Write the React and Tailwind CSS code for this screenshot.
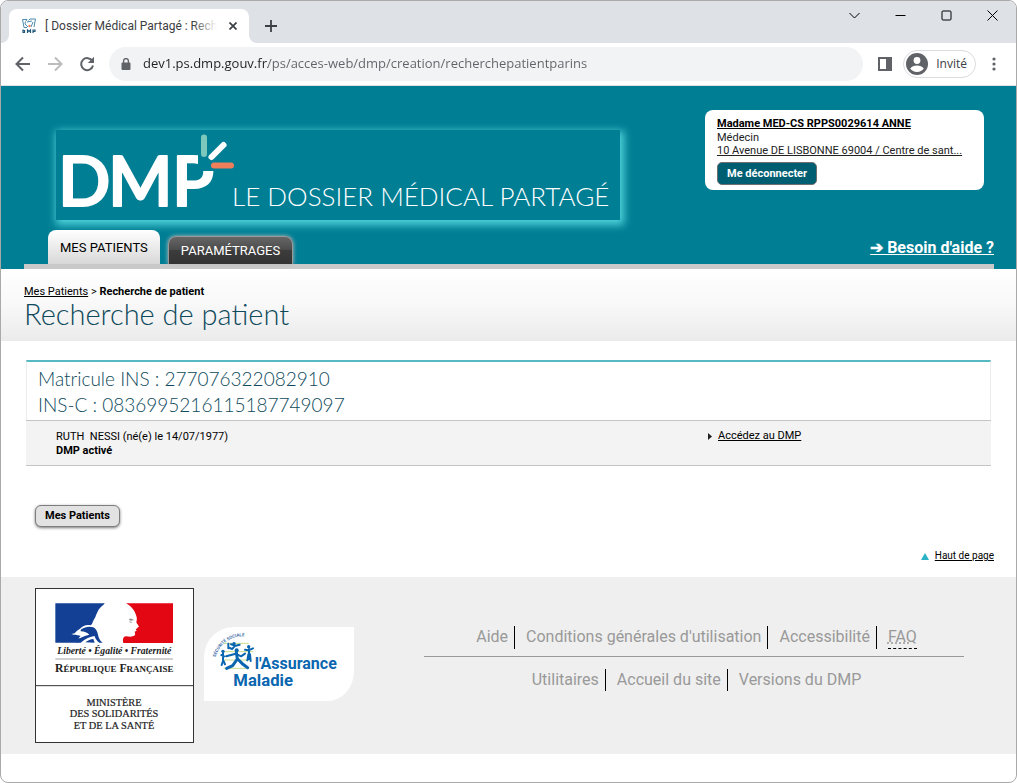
import React from "react";

const UI = "font-['Open_Sans','Noto_Sans',sans-serif]";
const THIN = "font-['Lato',sans-serif] font-light";

function Favicon() {
  return (
    <svg className="size-4 shrink-0" viewBox="0 0 16 16" fill="none" aria-hidden="true">
      <path d="M1.500 1.500h4.500l-1 1.500M7.500 2.500L9 1h5.500l-1.500 8M1.500 1.500l1.500 8h3M4.500 3.500L4 6l3 3M6 4l5-1M12 4l-2 5" stroke="#4a8aae" strokeWidth="1" />
      <circle cx="8.500" cy="8" r="1.200" fill="#ee7f5d" />
      <path d="M2 11.500v3h1.500v-2H2M6.500 15v-3L8 13.500l1.500-1.500v3M12 15v-3h2v1.500h-2" stroke="#24587a" strokeWidth="1.200" />
    </svg>
  );
}

function BrowserChrome() {
  return (
    <header className={UI}>
      <div className="flex h-[42px] items-end bg-[#dee1e6] pl-2">
        <div className="relative flex h-[34px] w-60 items-center rounded-t-lg bg-white pl-3 pr-2">
          <Favicon />
          <span className="relative ml-2 w-[172px] overflow-hidden whitespace-nowrap font-['Roboto',sans-serif] text-xs text-[#3c4043]">
            [ Dossier Médical Partagé : Recherche
            <span className="absolute inset-y-0 right-0 w-6 bg-linear-to-r from-transparent to-white" />
          </span>
          <button type="button" aria-label="Fermer l'onglet" className="ml-2 flex size-4 items-center justify-center text-[#3c4043]">
            <svg className="size-2" viewBox="0 0 8 8" stroke="currentColor" strokeWidth="1.700">
              <path d="M.5.5l7 7M7.500.5l-7 7" />
            </svg>
          </button>
          <svg className="absolute -right-2 bottom-0 size-2" viewBox="0 0 8 8" fill="#fff" aria-hidden="true">
            <path d="M0 0v8h8A8 8 0 0 1 0 0" />
          </svg>
          <svg className="absolute -left-2 bottom-0 size-2" viewBox="0 0 8 8" fill="#fff" aria-hidden="true">
            <path d="M8 0v8H0A8 8 0 0 0 8 0" />
          </svg>
        </div>
        <button type="button" aria-label="Nouvel onglet" className="mb-[7px] ml-3 flex size-5 items-center justify-center text-[#3c4043]">
          <svg className="size-3" viewBox="0 0 12 12" stroke="currentColor" strokeWidth="1.800">
            <path d="M6 0v12M0 6h12" />
          </svg>
        </button>
        <div className="ml-auto flex gap-[6px] self-start pr-1 text-black">
          {[
            ["Rechercher des onglets", "M.5 3l5 5 5-5"],
            ["Réduire", "M.5 5.500h10"],
            ["Agrandir", "M2 1h7a1 1 0 0 1 1 1v7a1 1 0 0 1-1 1H2a1 1 0 0 1-1-1V2a1 1 0 0 1 1-1z"],
            ["Fermer", "M.5.5l10 10M10.500.5l-10 10"],
          ].map(([label, d]) => (
            <button key={label} type="button" aria-label={label} className="flex h-7 w-10 items-center justify-center">
              <svg className="size-[11px]" viewBox="0 0 11 11" fill="none" stroke="currentColor" strokeWidth="1">
                <path d={d} />
              </svg>
            </button>
          ))}
        </div>
      </div>
      <div className="flex h-[42px] items-center bg-white pl-[14px] pr-5 text-[#5f6368]">
        <button type="button" aria-label="Précédent">
          <svg className="size-4" viewBox="0 0 16 16" fill="none" stroke="currentColor" strokeWidth="2">
            <path d="M15 8H2M8 1.500L1.500 8 8 14.500" />
          </svg>
        </button>
        <button type="button" aria-label="Suivant" className="ml-4 text-[#babcbe]">
          <svg className="size-4" viewBox="0 0 16 16" fill="none" stroke="currentColor" strokeWidth="2">
            <path d="M1 8h13M8 1.500L14.500 8 8 14.500" />
          </svg>
        </button>
        <button type="button" aria-label="Actualiser" className="ml-4">
          <svg className="size-4" viewBox="0 0 16 16" fill="none" stroke="currentColor" strokeWidth="2">
            <path d="M13.400 5.200A6 6 0 1 0 14 9.500" />
            <path d="M15 .8V7H8.800z" fill="currentColor" stroke="none" />
          </svg>
        </button>
        <label className="ml-[14px] flex h-[34px] min-w-0 flex-1 items-center rounded-full bg-[#f1f3f4] pl-3">
          <svg className="h-3 w-[10px] shrink-0" viewBox="0 0 10 12" fill="none" aria-hidden="true">
            <rect x="0.500" y="4.500" width="9" height="7.500" rx="1" fill="#5f6368" />
            <path d="M2.600 5V3a2.400 2.400 0 0 1 4.800 0v2" stroke="#5f6368" strokeWidth="1.400" />
          </svg>
          <input
            type="text"
            aria-label="Adresse"
            defaultValue="dev1.ps.dmp.gouv.fr/ps/acces-web/dmp/creation/recherchepatientparins"
            className="ml-3 min-w-0 flex-1 bg-[linear-gradient(90deg,#202124_125px,#5f6368_125px)] bg-clip-text text-[13px] text-transparent outline-none"
          />
        </label>
        <button type="button" aria-label="Panneau latéral" className="ml-[15px]">
          <svg className="size-[14px]" viewBox="0 0 14 14" aria-hidden="true">
            <path d="M0 0h14v14H0zM2 2v10h6V2z" fill="currentColor" fillRule="evenodd" />
          </svg>
        </button>
        <button type="button" className="ml-[11px] flex h-7 items-center gap-2 rounded-full border border-[#dadce0] pl-[2px] pr-2 text-xs text-[#3c4043]">
          <svg className="size-[22px]" viewBox="0 0 22 22" aria-hidden="true">
            <circle cx="11" cy="11" r="11" fill="#5f6368" />
            <circle cx="11" cy="7.500" r="3.400" fill="#fff" />
            <path d="M4.200 15.600c1.300-2.300 4-3.200 6.800-3.200s5.500.9 6.800 3.200A8.200 8.200 0 0 1 11 19a8.200 8.200 0 0 1-6.800-3.400z" fill="#fff" />
          </svg>
          Invité
        </button>
        <button type="button" aria-label="Menu" className="ml-4">
          <svg className="h-[14px] w-1" viewBox="0 0 4 14" fill="currentColor">
            <circle cx="2" cy="2" r="1.600" />
            <circle cx="2" cy="7" r="1.600" />
            <circle cx="2" cy="12" r="1.600" />
          </svg>
        </button>
      </div>
    </header>
  );
}

function DmpMark() {
  return (
    <svg className="h-[90px] w-[180px] shrink-0" viewBox="0 0 180 90" role="img" aria-label="DMP">
      <g fill="#fff" stroke="#fff" strokeWidth="2" strokeLinejoin="round" fontFamily="Lato" fontWeight="600" fontSize="69">
        <text x="2" y="76">D</text>
        <text x="52" y="76">M</text>
        <text x="116" y="76">P</text>
      </g>
      <path d="M142 20h26v21h-26z" fill="#007e94" />
      <g strokeLinecap="round" strokeWidth="6">
        <path d="M148 7.500V24" stroke="#7cc8bd" />
        <path d="M155.500 27L167.500 15" stroke="#fff" />
        <path d="M158 35.500h17" stroke="#ee7f5a" />
      </g>
    </svg>
  );
}

function SiteHeader() {
  return (
    <div className="bg-[#007e94]">
      <div className="flex items-start justify-between pl-[55px] pr-8 pt-6">
        <div className="mt-5 flex items-end bg-[#007e94] pr-[11px] shadow-[2px_3px_8px_2px_#4fd3da]">
          <DmpMark />
          <span className={`${THIN} -ml-1 whitespace-nowrap pb-[6px] text-[26px] leading-9 text-white`}>LE DOSSIER MÉDICAL PARTAGÉ</span>
        </div>
        <div className="w-[279px] rounded-lg bg-white px-3 pb-[5px] pt-[7px] text-[11px] leading-[13px] text-[#222]">
          <a href="#compte" className="block font-bold leading-[14px] text-black underline">Madame MED-CS RPPS0029614 ANNE</a>
          <p>Médecin</p>
          <a href="#adresse" className="block whitespace-nowrap underline">10 Avenue DE LISBONNE 69004 / Centre de sant...</a>
          <button type="button" className="mt-[5px] h-[23px] rounded-[5px] border border-[#6f6f6f] bg-[#005e72] px-[9px] font-bold text-white">
            Me déconnecter
          </button>
        </div>
      </div>
      <div className="flex items-end pl-[47px] pr-[22px] pt-[10px]">
        <a href="#patients" className="flex h-[34px] items-center rounded-t-lg bg-linear-to-b from-white to-[#d8d8d8] px-3 pt-[2px] text-[13px] text-black">
          MES PATIENTS
        </a>
        <a href="#parametrages" className="ml-2 flex h-[28px] items-center rounded-t-lg border border-b-0 border-[#999] bg-[linear-gradient(#666,#4a4a4a_50%,#3c3c3c_50%,#333)] px-3 text-[13px] text-white shadow-[0_0_4px_#bbb]">
          PARAMÉTRAGES
        </a>
        <a href="#aide" className="mb-1 ml-auto text-base font-bold text-white underline">
          ➔ Besoin d'aide ?
        </a>
      </div>
      <div className="ml-[23px] mr-[22px] h-[5px] bg-[#c9c9c9]" />
    </div>
  );
}

function PatientPanel() {
  return (
    <section className="mx-[25px] mt-[19px]">
      <div className={`${THIN} border-x border-t-2 border-[#ececec] border-t-[#55b9c3] px-[11px] pb-[2px] pt-1 text-[19px] leading-[26px] text-[#0e4a5c]`}>
        <p>Matricule INS : 277076322082910</p>
        <p>INS-C : 0836995216115187749097</p>
      </div>
      <div className="flex items-start border-y border-[#c4c4c4] bg-[#f3f3f3] pb-[7px] pl-[30px] pt-2 text-[11px] leading-[14px] text-black">
        <div className="flex-1 pt-px">
          <p className="whitespace-pre">RUTH  NESSI (né(e) le 14/07/1977)</p>
          <p className="font-bold">DMP activé</p>
        </div>
        <div className="w-[283px]">
          <a href="#dmp" className="inline-flex items-center gap-[6px] underline">
            <svg className="h-[7px] w-1" viewBox="0 0 4 7" fill="#222" aria-hidden="true">
              <path d="M0 0l4 3.500L0 7z" />
            </svg>
            Accédez au DMP
          </a>
        </div>
      </div>
    </section>
  );
}

function RepubliqueLogo() {
  return (
    <svg className="h-[155px] w-[159px] shrink-0" viewBox="45 24 477 465" role="img" aria-label="République Française">
      <rect x="46.500" y="25.500" width="474" height="462" fill="#fff" stroke="#333" strokeWidth="3" />
      <path d="M46 317h475" stroke="#333" strokeWidth="3" />
      <path d="M106 70h148c-2 6-10 8-14 14-6 6-8 14-12 22-2 8-8 14-12 26l-4 4c-12-4-24 2-32 10-6 4-12 8-16 14l-10 2 8 2c8 0 14 2 20 4-6 6-12 12-12 20H106z" fill="#134094" />
      <path d="M184 148c12-8 22-10 36-6 8 4 12 12 14 22 2 10 6 18 14 24h-10c-8-6-12-12-14-20-14 2-28 8-42 20h-14c8-16 26-20 40-24-6-6-14-10-26-10 0-2 0-4 2-6z" fill="#134094" />
      <path d="M196 187c8-6 16-10 24-10l4 11zM170 174c10 2 18 0 26-4l-12 14-14 4zM200 150l14 4 6 8-14-8z" fill="#134094" />
      <path d="M318 70h141v119H310c-2-6-2-14 2-18 6-6 16 2 26-2 8-2 8-6 7-10l-1-4 6-3-3-4 5-3c0-3 3-4 5-5-2-5-7-9-8-14 2-6 2-12 0-18-5-16-14-29-31-38z" fill="#e30613" />
      <path d="M327 118c5-2 9-1 13 2-4 0-5 2-9 1zM328 126c3-1 6 0 8 2" fill="#888" stroke="#999" strokeWidth="2" />
      <g textAnchor="middle" fill="#222">
        <text x="283" y="223" fontFamily="Liberation Serif" fontStyle="italic" fontWeight="700" fontSize="29">Liberté • Égalité • Fraternité</text>
        <path d="M106 237h353" stroke="#777" strokeWidth="2" />
        <text x="283" y="275" fontFamily="Liberation Serif" fontWeight="700" fontSize="35">
          R<tspan fontSize="27">ÉPUBLIQUE</tspan> F<tspan fontSize="27">RANÇAISE</tspan>
        </text>
        <g fontFamily="Liberation Serif" fontSize="31" stroke="#222" strokeWidth="0.600">
          <text x="282" y="377">MINISTÈRE</text>
          <text x="282" y="412">DES SOLIDARITÉS</text>
          <text x="282" y="447">ET DE LA SANTÉ</text>
        </g>
      </g>
    </svg>
  );
}

function AssuranceLogo() {
  return (
    <svg className="mt-[39px] ml-[10px] h-[74px] w-[150px] shrink-0" viewBox="27 36 450 222" role="img" aria-label="l'Assurance Maladie">
      <path d="M117 36h360v132a80 90 0 0 1-80 90H27V126a90 90 0 0 1 90-90z" fill="#fff" />
      <path d="M86 85h75M80 110h95M82 135h80M86 160h76" stroke="#c9dd8c" strokeWidth="3" />
      <defs>
        <path id="arc" d="M62 127A84 84 0 0 1 150 64" />
      </defs>
      <text fontFamily="Roboto" fontWeight="700" fontSize="13" fill="#3f6fa9">
        <textPath href="#arc">SÉCURITÉ SOCIALE</textPath>
      </text>
      <g fill="none" stroke="#0a66b0" strokeLinecap="round" strokeLinejoin="round">
        <path d="M124 112l3 20-14 20-18 8M128 132l16 16 14 10" strokeWidth="9" />
        <path d="M94 124l28-8 16 8 12-8" strokeWidth="6" />
        <path d="M84 114v26M79 120l10 4M84 138l-4 12M86 138l4 10" strokeWidth="6" />
        <path d="M162 102v30M150 104l10 2 14-6M160 118l-3 18M165 118l2 20" strokeWidth="6" />
        <path d="M108 88l14 4 12-3M120 92l-8 10-8-3M100 86v14" strokeWidth="6" />
      </g>
      <g fill="#0a66b0">
        <circle cx="125" cy="106" r="6" />
        <circle cx="84" cy="109" r="5" />
        <circle cx="161" cy="95" r="5" />
        <circle cx="117" cy="86" r="5" />
      </g>
      <text fontFamily="Roboto" fontWeight="700" fill="#0a66b0">
        <tspan x="179" y="163" fontSize="48">l'Assurance</tspan>
        <tspan x="115" y="213" fontSize="50">Maladie</tspan>
      </text>
    </svg>
  );
}

function FooterRow({ items }) {
  return (
    <ul className="flex justify-center">
      {items.map((label, i) => (
        <li key={label} className={i < items.length - 1 ? "border-r border-black pl-[11px] pr-[6px]" : "pl-[11px] pr-[6px]"}>
          <a href="#footer" className={label === "FAQ" ? "block border-b border-dashed border-black underline decoration-dotted" : ""}>
            {label}
          </a>
        </li>
      ))}
    </ul>
  );
}

export default function App() {
  return (
    <div className="flex min-h-screen flex-col overflow-hidden rounded-lg border border-[#a9a9a9] bg-white font-['Roboto',sans-serif]">
      <BrowserChrome />
      <div className="h-px bg-[#dfe1e5]" />
      <SiteHeader />
      <main>
        <div className="bg-linear-to-b from-white via-[#f8f8f8] to-[#ebebeb] pb-3 pl-[23px] pt-4 text-[11px] leading-[14px] text-black">
          <nav>
            <a href="#patients" className="underline">Mes Patients</a> &gt; <span className="font-bold">Recherche de patient</span>
          </nav>
          <h1 className={`${THIN} text-[29px] leading-[30px] text-[#0e4a5c]`}>Recherche de patient</h1>
        </div>
        <PatientPanel />
        <button type="button" className="ml-[34px] mt-[39px] block h-[22px] rounded-md border border-[#7d7d7d] bg-[#e2e2e2] px-[9px] text-[11px] font-bold text-black shadow-[0_1px_3px_#777]">
          Mes Patients
        </button>
        <div className="mb-[14px] mt-[22px] flex justify-end pr-[22px] text-[10px] leading-[14px] text-black">
          <a href="#haut" className="flex items-center gap-[6px] underline">
            <svg className="h-[7px] w-2" viewBox="0 0 8 7" fill="#2bb2c6" aria-hidden="true">
              <path d="M4 0l4 7H0z" />
            </svg>
            Haut de page
          </a>
        </div>
      </main>
      <footer className="flex items-start bg-[#efefef] py-[11px] pl-[34px]">
        <RepubliqueLogo />
        <AssuranceLogo />
        <nav className="ml-[70px] mr-[52px] mt-[38px] flex-1 whitespace-nowrap text-base leading-[22px] text-[#999]">
          <FooterRow items={["Aide", "Conditions générales d'utilisation", "Accessibilité", "FAQ"]} />
          <hr className="mb-3 mt-[7px] border-[#999]" />
          <FooterRow items={["Utilitaires", "Accueil du site", "Versions du DMP"]} />
        </nav>
      </footer>
    </div>
  );
}
